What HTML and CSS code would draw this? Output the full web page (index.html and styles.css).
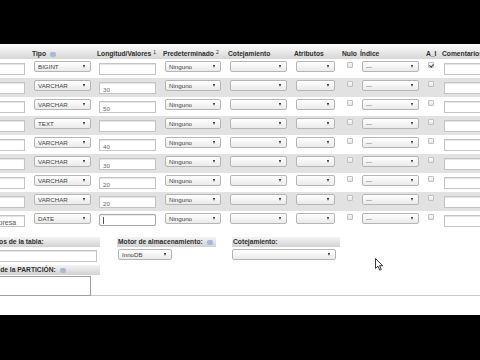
FILE: index.html
```html
<!DOCTYPE html>
<html lang="es">
<head>
<meta charset="utf-8">
<title>Estructura de tabla</title>
<link rel="stylesheet" href="styles.css">
</head>
<body>
<div class="frame">
  <table class="fields">
    <colgroup>
      <col class="k-name"><col class="k-tipo"><col class="k-long"><col class="k-def"><col class="k-cot"><col class="k-atr"><col class="k-nulo"><col class="k-ind"><col class="k-ai"><col class="k-com">
    </colgroup>
    <thead>
      <tr>
        <th>Nombre</th>
        <th>Tipo <span class="help"></span></th>
        <th>Longitud/Valores<sup>1</sup></th>
        <th>Predeterminado<sup>2</sup></th>
        <th>Cotejamiento</th>
        <th>Atributos</th>
        <th>Nulo</th>
        <th>Índice</th>
        <th>A_I</th>
        <th>Comentarios</th>
      </tr>
    </thead>
    <tbody>
      <tr>
        <td><input class="inp w-name" value=""></td>
        <td><div class="sel w-tipo">BIGINT</div></td>
        <td><input class="inp w-long" value=""></td>
        <td><div class="sel w-def">Ninguno</div></td>
        <td><div class="sel w-cot"></div></td>
        <td><div class="sel w-atr"></div></td>
        <td class="cb-cell"><span class="cb"></span></td>
        <td><div class="sel w-ind">---</div></td>
        <td class="cb-cell ai"><span class="cb on"></span></td>
        <td><input class="inp w-com" value=""></td>
      </tr>
      <tr>
        <td><input class="inp w-name" value=""></td>
        <td><div class="sel w-tipo">VARCHAR</div></td>
        <td><input class="inp w-long" value="30"></td>
        <td><div class="sel w-def">Ninguno</div></td>
        <td><div class="sel w-cot"></div></td>
        <td><div class="sel w-atr"></div></td>
        <td class="cb-cell"><span class="cb"></span></td>
        <td><div class="sel w-ind">---</div></td>
        <td class="cb-cell ai"><span class="cb"></span></td>
        <td><input class="inp w-com" value=""></td>
      </tr>
      <tr>
        <td><input class="inp w-name" value=""></td>
        <td><div class="sel w-tipo">VARCHAR</div></td>
        <td><input class="inp w-long" value="50"></td>
        <td><div class="sel w-def">Ninguno</div></td>
        <td><div class="sel w-cot"></div></td>
        <td><div class="sel w-atr"></div></td>
        <td class="cb-cell"><span class="cb"></span></td>
        <td><div class="sel w-ind">---</div></td>
        <td class="cb-cell ai"><span class="cb"></span></td>
        <td><input class="inp w-com" value=""></td>
      </tr>
      <tr>
        <td><input class="inp w-name" value=""></td>
        <td><div class="sel w-tipo">TEXT</div></td>
        <td><input class="inp w-long" value=""></td>
        <td><div class="sel w-def">Ninguno</div></td>
        <td><div class="sel w-cot"></div></td>
        <td><div class="sel w-atr"></div></td>
        <td class="cb-cell"><span class="cb"></span></td>
        <td><div class="sel w-ind">---</div></td>
        <td class="cb-cell ai"><span class="cb"></span></td>
        <td><input class="inp w-com" value=""></td>
      </tr>
      <tr>
        <td><input class="inp w-name" value=""></td>
        <td><div class="sel w-tipo">VARCHAR</div></td>
        <td><input class="inp w-long" value="40"></td>
        <td><div class="sel w-def">Ninguno</div></td>
        <td><div class="sel w-cot"></div></td>
        <td><div class="sel w-atr"></div></td>
        <td class="cb-cell"><span class="cb"></span></td>
        <td><div class="sel w-ind">---</div></td>
        <td class="cb-cell ai"><span class="cb"></span></td>
        <td><input class="inp w-com" value=""></td>
      </tr>
      <tr>
        <td><input class="inp w-name" value=""></td>
        <td><div class="sel w-tipo">VARCHAR</div></td>
        <td><input class="inp w-long" value="30"></td>
        <td><div class="sel w-def">Ninguno</div></td>
        <td><div class="sel w-cot"></div></td>
        <td><div class="sel w-atr"></div></td>
        <td class="cb-cell"><span class="cb"></span></td>
        <td><div class="sel w-ind">---</div></td>
        <td class="cb-cell ai"><span class="cb"></span></td>
        <td><input class="inp w-com" value=""></td>
      </tr>
      <tr>
        <td><input class="inp w-name" value=""></td>
        <td><div class="sel w-tipo">VARCHAR</div></td>
        <td><input class="inp w-long" value="20"></td>
        <td><div class="sel w-def">Ninguno</div></td>
        <td><div class="sel w-cot"></div></td>
        <td><div class="sel w-atr"></div></td>
        <td class="cb-cell"><span class="cb"></span></td>
        <td><div class="sel w-ind">---</div></td>
        <td class="cb-cell ai"><span class="cb"></span></td>
        <td><input class="inp w-com" value=""></td>
      </tr>
      <tr>
        <td><input class="inp w-name" value=""></td>
        <td><div class="sel w-tipo">VARCHAR</div></td>
        <td><input class="inp w-long" value="20"></td>
        <td><div class="sel w-def">Ninguno</div></td>
        <td><div class="sel w-cot"></div></td>
        <td><div class="sel w-atr"></div></td>
        <td class="cb-cell"><span class="cb"></span></td>
        <td><div class="sel w-ind">---</div></td>
        <td class="cb-cell ai"><span class="cb"></span></td>
        <td><input class="inp w-com" value=""></td>
      </tr>
      <tr>
        <td><input class="inp w-name big" value="ingreso_empresa"></td>
        <td><div class="sel w-tipo">DATE</div></td>
        <td><div class="inp w-long focus"><span class="caret"></span></div></td>
        <td><div class="sel w-def">Ninguno</div></td>
        <td><div class="sel w-cot"></div></td>
        <td><div class="sel w-atr"></div></td>
        <td class="cb-cell"><span class="cb"></span></td>
        <td><div class="sel w-ind">---</div></td>
        <td class="cb-cell ai"><span class="cb"></span></td>
        <td><input class="inp w-com" value=""></td>
      </tr>
    </tbody>
  </table>

  <div class="opts">
    <div class="opt opt-com">
      <div class="lbl">Comentarios de la tabla:</div>
      <input class="inp w-tcom" value="">
    </div>
    <div class="opt opt-motor">
      <div class="lbl">Motor de almacenamiento: <span class="help"></span></div>
      <div class="sel w-motor">InnoDB</div>
    </div>
    <div class="opt opt-cot">
      <div class="lbl">Cotejamiento:</div>
      <div class="sel w-tcot"></div>
    </div>
  </div>

  <div class="part">
    <div class="lbl lbl-part">Definición de la PARTICIÓN: <span class="help"></span></div>
    <textarea class="area"></textarea>
  </div>

  <svg class="cursor" width="9" height="13" viewBox="0 0 9 13" aria-hidden="true">
    <path d="M0.5 0.5 L0.5 10.5 L3 8.2 L4.8 12.2 L6.3 11.5 L4.6 7.7 L7.8 7.7 Z" fill="#fff" stroke="#222" stroke-width="0.9" stroke-linejoin="round"/>
  </svg>
</div>
</body>
</html>
```

FILE: styles.css
```css
html, body {
  margin: 0;
  padding: 0;
}

body {
  width: 480px;
  height: 360px;
  overflow: hidden;
  background: #000;
  font-family: "Liberation Sans", Arial, sans-serif;
  color: #333;
}

.frame {
  position: relative;
  margin-top: 44px;
  height: 271px;
  background: #fff;
  overflow: hidden;
}

/* ---------- field table ---------- */
.fields {
  border-collapse: collapse;
  table-layout: fixed;
  width: 560px;
  margin-left: -40px;
}

.k-name { width: 70px; }
.k-tipo { width: 65px; }
.k-long { width: 66px; }
.k-def  { width: 65px; }
.k-cot  { width: 66px; }
.k-atr  { width: 48px; }
.k-nulo { width: 18px; }
.k-ind  { width: 66px; }
.k-ai   { width: 16px; }
.k-com  { width: 80px; }

.fields th {
  box-sizing: border-box;
  height: 15px;
  padding: 3px 0 0 2px;
  text-align: left;
  vertical-align: middle;
  white-space: nowrap;
  font-size: 6.7px;
  font-weight: bold;
  color: #2e2e2e;
  background: linear-gradient(#fdfdfd, #d6d6d6);
}

.fields th sup {
  font-size: 5px;
  font-weight: normal;
  margin-left: 2px;
  vertical-align: 2px;
}

.fields td {
  height: 19px;
  padding: 0 0 0 4px;
  vertical-align: top;
  box-sizing: border-box;
}

.fields tbody tr:nth-child(even) td {
  background: #e2e2e2;
}

.help {
  display: inline-block;
  width: 6px;
  height: 5px;
  margin-left: 2px;
  border-radius: 2px;
  background: #a9b9da;
  vertical-align: -1px;
}

/* ---------- controls ---------- */
.sel {
  position: relative;
  box-sizing: border-box;
  height: 11px;
  margin-top: 2px;
  padding-left: 3px;
  border: 1px solid #b5b5b5;
  border-radius: 2px;
  background: linear-gradient(#ffffff, #eaeaea);
  font-size: 6.2px;
  line-height: 9px;
  color: #444;
  white-space: nowrap;
  overflow: hidden;
}

.sel::after {
  content: "";
  position: absolute;
  right: 5px;
  top: 3px;
  border-left: 1.5px solid transparent;
  border-right: 1.5px solid transparent;
  border-top: 3px solid #1e1e1e;
}

.inp {
  display: block;
  box-sizing: border-box;
  height: 12px;
  margin: 4px 0 0 0;
  padding: 2px 0 0 3px;
  border: 1px solid #c4c4c4;
  background: #fff;
  box-shadow: inset 0 1px 1px #e4e4e4;
  font-family: "Liberation Sans", Arial, sans-serif;
  font-size: 6.2px;
  color: #666;
  outline: none;
}

.inp.big {
  font-size: 7px;
  color: #555;
  text-indent: -6px;
}

.inp.focus {
  position: relative;
  margin-top: 3px;
  border-color: #a8a8a8;
  border-radius: 2px;
  box-shadow: 0 0 1px #b8c8e0, inset 0 1px 1px #e8e8e8;
  padding-top: 2px;
}

.caret {
  display: block;
  width: 1px;
  height: 7px;
  background: #555;
}

.w-name { width: 61px; }
.w-tipo { width: 57px; }
.w-long { width: 57px; }
.w-def  { width: 56px; }
.w-cot  { width: 57px; }
.w-atr  { width: 39px; }
.w-ind  { width: 57px; }
.w-com  { width: 70px; }

.cb-cell { padding-left: 7px !important; }
.cb-cell.ai { padding-left: 4px !important; }

.cb {
  display: block;
  position: relative;
  box-sizing: border-box;
  width: 6px;
  height: 6px;
  margin-top: 3px;
  border: 1px solid #c0c0c0;
  border-radius: 1px;
  background: linear-gradient(#fafafa, #e6e6e6);
}

.cb.on::after {
  content: "";
  position: absolute;
  left: 1px;
  top: 0;
  width: 1.5px;
  height: 3px;
  border-right: 1px solid #444;
  border-bottom: 1px solid #444;
  transform: rotate(40deg);
}

/* ---------- table options ---------- */
.opts {
  display: flex;
  margin: 7px 0 0 -35px;
}

.opt { display: flex; flex-direction: column; }

.lbl {
  box-sizing: border-box;
  height: 10px;
  padding-left: 1px;
  font-size: 6.7px;
  font-weight: bold;
  line-height: 10px;
  color: #2e2e2e;
  white-space: nowrap;
  background: linear-gradient(#f4f4f4, #d2d2d2);
}

.opt-com { width: 135px; }
.opt-com .inp { margin-top: 3px; }
.w-tcom { width: 132px; }

.opt-motor { width: 99px; margin-left: 17px; }
.w-motor { width: 54px; margin-left: 1px; margin-top: 2px; height: 11px; }

.opt-cot { width: 108px; margin-left: 16px; }
.w-tcot { width: 104px; margin-top: 2px; height: 11px; }

/* ---------- partition ---------- */
.part {
  display: flex;
  flex-direction: column;
  margin: 3px 0 0 0;
  border-bottom: 1px solid #c9c9c9;
}

.lbl-part {
  width: 136px;
  margin-left: -36px;
  padding-left: 2px;
}

.area {
  display: block;
  box-sizing: border-box;
  width: 127px;
  height: 20px;
  margin: 1px 0 -1px -36px;
  border: 1px solid #a0a0a0;
  background: #fff;
  resize: none;
  outline: none;
}

.cursor {
  position: absolute;
  left: 375px;
  top: 214px;
}
```
